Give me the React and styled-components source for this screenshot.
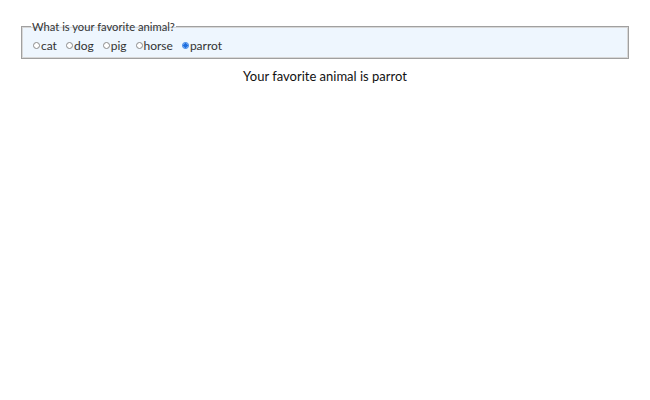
import React, { useState } from "react";
import styled, { createGlobalStyle } from "styled-components";

const Global = createGlobalStyle`
  body { margin: 8px; font-family: Lato, "Liberation Sans", sans-serif; color: #222; background: #fff; }
`;

const Wrap = styled.div`
  padding: 0 13px;
`;

const Fieldset = styled.fieldset`
  margin: 0;
  margin-top: 12px;
  padding: 5px 10px 5px 11px;
  border: 1px solid #a0a0a0;
  box-shadow: inset 0 0 0 1px #d8d8d8;
  background: #eef6fe;
  display: flex;
  gap: 9px;
  align-items: center;
`;

const Legend = styled.legend`
  padding: 0 1px;
  font-size: 11.2px;
  color: #333;
  margin-left: -2px;
`;

const Label = styled.label`
  display: flex;
  align-items: center;
  font-size: 12px;
  color: #333;
`;

const Radio = styled.input.attrs({ type: "radio" })`
  appearance: none;
  width: 7px;
  height: 7px;
  margin: 0 1px 0 0;
  border: 1px solid #8a8a8a;
  border-radius: 50%;
  background: #fff;
  &:checked {
    border-color: #2a7ae4;
    background: radial-gradient(circle, #1f6fe0 0 2px, #fff 2.5px);
  }
`;

const Result = styled.p`
  margin: 9px 0 0 0;
  text-align: center;
  font-size: 13px;
  color: #111;
`;

const animals = ["cat", "dog", "pig", "horse", "parrot"];

export default function App() {
  const [val, setVal] = useState("parrot");
  return (
    <Wrap>
      <Global />
      <Fieldset>
        <Legend>What is your favorite animal?</Legend>
        {animals.map((a) => (
          <Label key={a}>
            <Radio name="animal" value={a} checked={val === a} onChange={() => setVal(a)} />
            {a}
          </Label>
        ))}
      </Fieldset>
      <Result>Your favorite animal is {val}</Result>
    </Wrap>
  );
}
